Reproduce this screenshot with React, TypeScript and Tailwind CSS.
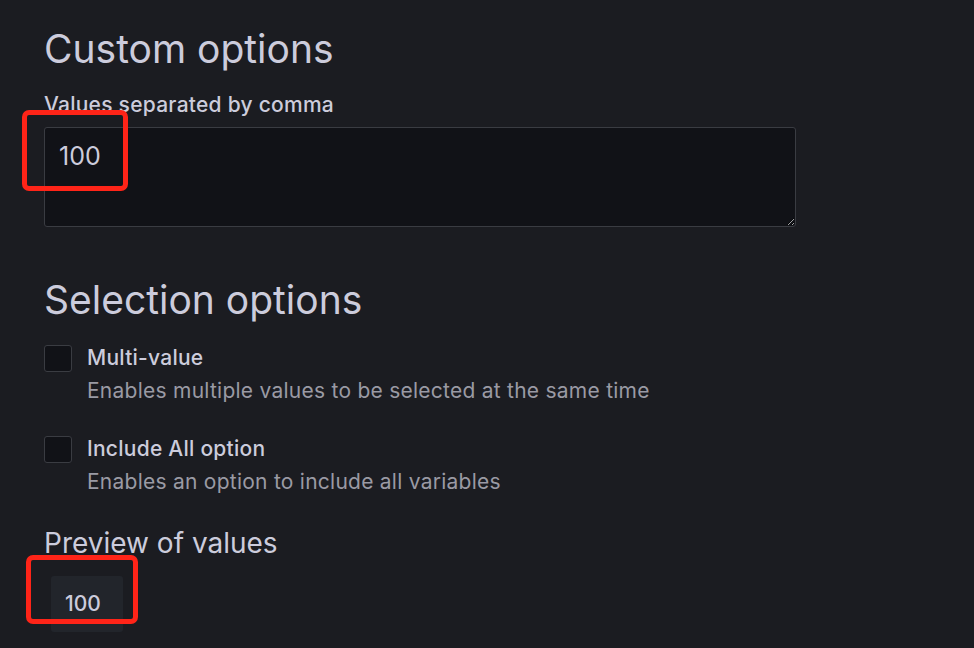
export default function App() {
  return (
    <div className="min-h-screen w-full bg-[#1b1c21] font-['Inter',sans-serif] text-[#ccccdc] pl-[44px] pt-[25px]">
      {/* Custom options */}
      <h3 className="text-[39px] leading-[48px] font-normal">Custom options</h3>
      <label className="block mt-[20px] text-[21px] leading-[24px] tracking-[0.25px] font-medium">
        Values separated by comma
      </label>
      <div className="relative mt-[10px] w-[752px]">
        <textarea
          readOnly
          defaultValue="100"
          className="block w-[752px] h-[100px] bg-[#111217] border border-[#3a3c42] rounded-[3px] px-[14px] pt-[12px] pb-[4px] text-[25px] leading-[32px] text-[#ccccdc] outline-none"
        />
        <div className="absolute left-[-22px] top-[-17px] w-[106px] h-[81px] border-[5px] border-[#ff2418] rounded-[7px] pointer-events-none" />
      </div>

      {/* Selection options */}
      <h3 className="mt-[49px] text-[39px] leading-[48px] font-normal">Selection options</h3>

      <div className="mt-[21px] flex gap-[15px]">
        <div className="w-[28px] h-[27px] shrink-0 rounded-[3px] border border-[#3a3c42] bg-[#111217]" />
        <div className="pt-[1px]">
          <div className="text-[21px] leading-[24px] tracking-[0.25px] font-medium">Multi-value</div>
          <div className="mt-[9px] text-[21px] leading-[24px] tracking-[0.25px] text-[#9a9aa4]">
            Enables multiple values to be selected at the same time
          </div>
        </div>
      </div>

      <div className="mt-[33px] flex gap-[15px]">
        <div className="w-[28px] h-[27px] shrink-0 rounded-[3px] border border-[#3a3c42] bg-[#111217]" />
        <div className="pt-[1px]">
          <div className="text-[21px] leading-[24px] tracking-[0.25px] font-medium">Include All option</div>
          <div className="mt-[9px] text-[21px] leading-[24px] tracking-[0.25px] text-[#9a9aa4]">
            Enables an option to include all variables
          </div>
        </div>
      </div>

      {/* Preview */}
      <h4 className="mt-[31px] text-[28px] leading-[36px] font-normal">Preview of values</h4>
      <div className="relative mt-[15px] ml-[7px] w-[72px] h-[56px] flex items-center pl-[14px] bg-[#22252b] rounded-[3px]">
        <span className="text-[21px] leading-[24px] font-medium">100</span>
        <div className="absolute left-[-25px] top-[-21px] w-[112px] h-[69px] border-[5px] border-[#ff2418] rounded-[7px] pointer-events-none" />
      </div>
    </div>
  );
}
